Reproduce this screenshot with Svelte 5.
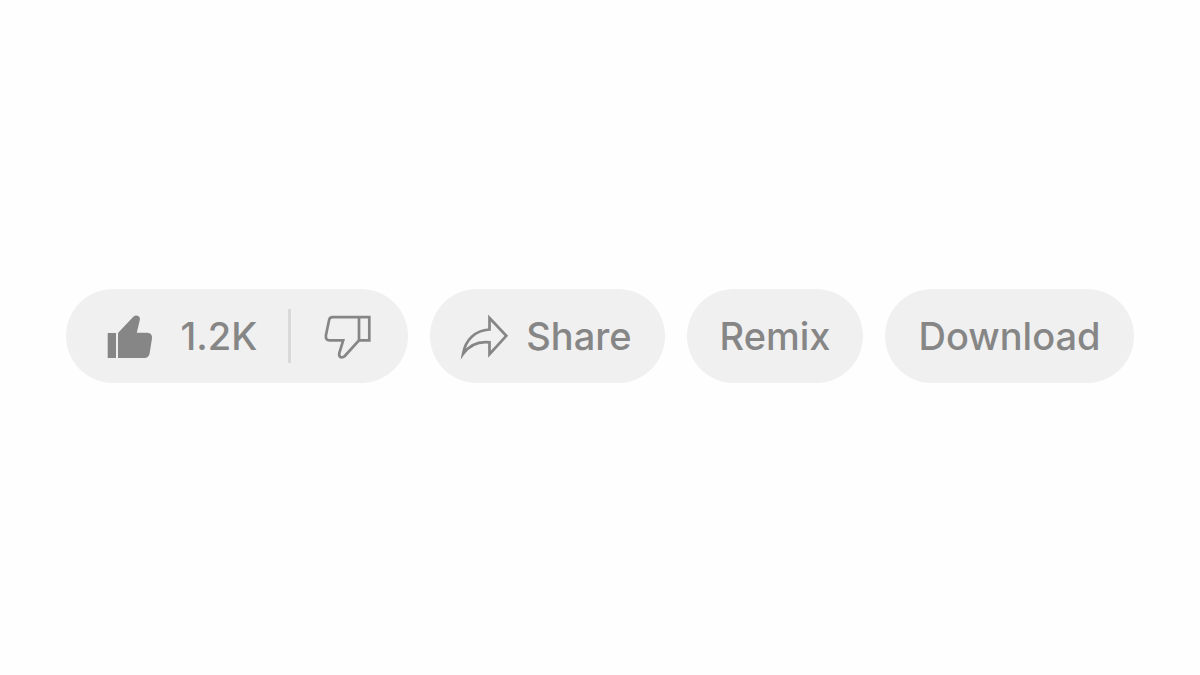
<script>
  let liked = $state(true);
  let disliked = $state(false);

  function toggleLike() {
    liked = !liked;
    if (liked) disliked = false;
  }

  function toggleDislike() {
    disliked = !disliked;
    if (disliked) liked = false;
  }
</script>

<main>
  <div class="actions">
    <div class="pill rating">
      <button class="like" type="button" aria-pressed={liked} onclick={toggleLike}>
        <svg class="solid" viewBox="0 -1 48 48" aria-hidden="true">
          <path d="M1.700 20H10V45H1.700Z" />
          <path d="M12 20L27.300 3.800Q28.600 2.500 30.500 2.500Q34.600 3 33.800 7L30.800 19.800H41.500Q46.600 20.400 46 25.500L43.600 40.500Q42.700 44.900 38.500 45H12Z" />
        </svg>
        <span>1.2K</span>
      </button>
      <span class="divider"></span>
      <button class="dislike" type="button" aria-label="Dislike" aria-pressed={disliked} onclick={toggleDislike}>
        <svg class="outline" viewBox="0 -1 48 48" aria-hidden="true">
          <path d="M35 4.200H8.500Q5.700 4.200 5.100 7L1.900 22.500Q1.400 27.300 5.500 27.300H19.200L15.300 40Q14.700 43.400 16.800 44.200Q19 44.700 20.600 43.200L35 27.300H45.300V4.200H35V27.300" />
        </svg>
      </button>
    </div>
    <button class="pill share" type="button">
      <svg class="outline" viewBox="0 -1 48 48" aria-hidden="true">
        <path stroke-miterlimit="10" d="M29.500 5L46.300 22.800L29.500 41.200V29.300C17 28 9 32.500 3 41C5.500 26.500 15 17.500 29.500 16.500Z" />
      </svg>
      <span>Share</span>
    </button>
    <button class="pill" type="button">Remix</button>
    <button class="pill" type="button">Download</button>
  </div>
</main>

<style>
  :global(body) {
    margin: 0;
    background: #fefefe;
  }

  main {
    display: flex;
    align-items: center;
    justify-content: center;
    box-sizing: border-box;
    min-height: 100vh;
    padding: 24px 24px 28px;
  }

  .actions {
    display: flex;
    flex-wrap: wrap;
    justify-content: center;
    gap: 22px;
  }

  button {
    display: flex;
    align-items: center;
    margin: 0;
    padding: 0;
    border: 0;
    background: none;
    color: #868686;
    font: 500 38px/48px Inter, sans-serif;
    white-space: nowrap;
    cursor: pointer;
  }

  .pill {
    box-sizing: border-box;
    padding: 23px 33px;
    border-radius: 48px;
    background: #f0f0f0;
  }

  .rating {
    display: flex;
    align-items: center;
    padding: 0;
  }

  .like {
    gap: 26px;
    padding: 23px 31px 23px 40px;
  }

  .dislike {
    padding: 23px 36px 23px 33px;
  }

  .share {
    gap: 18px;
    padding: 23px 33px 23px 30px;
  }

  .divider {
    width: 3px;
    height: 54px;
    background: #d9d9d9;
  }

  svg {
    flex: none;
    width: 48px;
    height: 48px;
    overflow: visible;
  }

  .solid {
    fill: #868686;
  }

  .outline {
    fill: none;
    stroke: #868686;
    stroke-width: 2.700;
  }
</style>
